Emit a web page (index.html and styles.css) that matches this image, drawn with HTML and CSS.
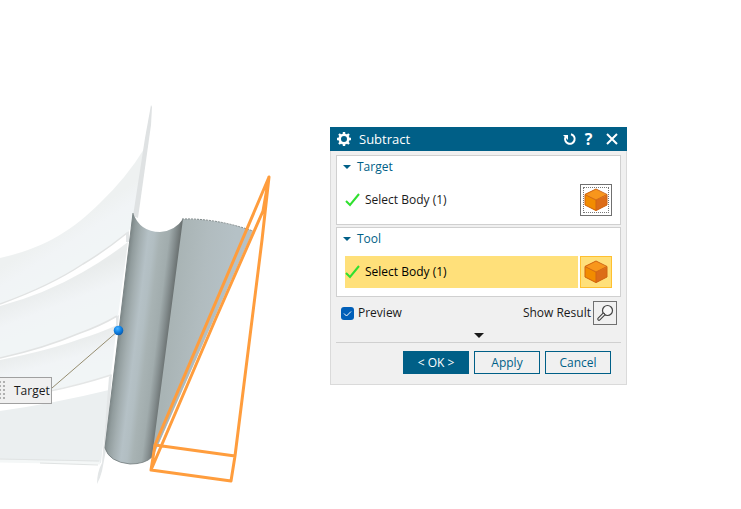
FILE: index.html
```html
<!DOCTYPE html>
<html lang="en">
<head>
<meta charset="utf-8">
<title>Subtract</title>
<link rel="stylesheet" href="styles.css">
</head>
<body>
<main class="viewport">
  <svg class="scene" width="280" height="500" viewBox="0 0 280 500" aria-hidden="true">
    <defs>
      <linearGradient id="barrel" gradientUnits="userSpaceOnUse" x1="133" y1="214" x2="182" y2="220">
        <stop offset="0" stop-color="#7d8788"/>
        <stop offset=".08" stop-color="#919c9d"/>
        <stop offset=".2" stop-color="#a3aeb0"/>
        <stop offset=".36" stop-color="#b5c1c6"/>
        <stop offset=".48" stop-color="#b2bec2"/>
        <stop offset=".6" stop-color="#a8b3b4"/>
        <stop offset=".78" stop-color="#a1acad"/>
        <stop offset=".9" stop-color="#858e8f"/>
        <stop offset="1" stop-color="#6c7373"/>
      </linearGradient>
      <linearGradient id="wing" gradientUnits="userSpaceOnUse" x1="178" y1="260" x2="232" y2="266">
        <stop offset="0" stop-color="#a9b4b5"/>
        <stop offset=".5" stop-color="#b1bcbf"/>
        <stop offset="1" stop-color="#b5c1c6"/>
      </linearGradient>
      <linearGradient id="vane" gradientUnits="userSpaceOnUse" x1="50" y1="284" x2="64" y2="320">
        <stop offset="0" stop-color="#e9ecec"/>
        <stop offset=".6" stop-color="#f1f4f6"/>
        <stop offset="1" stop-color="#f1f5f6"/>
      </linearGradient>
      <linearGradient id="vane-low" gradientUnits="userSpaceOnUse" x1="50" y1="345" x2="58" y2="375">
        <stop offset="0" stop-color="#e9ecec"/>
        <stop offset=".6" stop-color="#f1f4f6"/>
        <stop offset="1" stop-color="#f1f5f6"/>
      </linearGradient>
      <linearGradient id="vane-top" gradientUnits="userSpaceOnUse" x1="72" y1="222" x2="90" y2="250">
        <stop offset="0" stop-color="#eef1f1"/>
        <stop offset=".5" stop-color="#f1f4f6"/>
        <stop offset="1" stop-color="#f1f5f6"/>
      </linearGradient>
      <radialGradient id="ball" cx=".4" cy=".3" r=".7">
        <stop offset="0" stop-color="#4bb4ff"/>
        <stop offset=".5" stop-color="#1285e8"/>
        <stop offset="1" stop-color="#0759ad"/>
      </radialGradient>
    </defs>

    <path fill="url(#vane-top)" d="M0 258C42 249 72 231 100 203Q127 177 144 149L133 225L127 233Q105 251 83 264Q50 286 0 304Z"/>
    <path fill="none" stroke="#e1e3e3" stroke-width="1.5" d="M127 233Q105 251 83 264Q50 286 0 304"/>
    <path fill="url(#vane)" d="M0 306Q45 294 83 272Q106 259 128 242L118 316Q100 326 80 333Q45 348 0 358Z"/>
    <path fill="none" stroke="#e1e3e3" stroke-width="1.5" d="M117 316Q100 326 80 333Q45 348 0 358"/>
    <path fill="url(#vane-low)" d="M0 360Q50 350 80 339Q100 333 117 325L111 375Q70 388 0 399Z"/>
    <path fill="none" stroke="#e4e6e6" stroke-width="1.5" d="M111 375Q80 385 50 391"/>
    <path fill="#ebeff0" d="M0 411Q56 403 109 390L101 463L0 461Z"/>
    <path fill="none" stroke="#f4f7f7" stroke-width="3" d="M0 461L100 463"/>
    <path fill="none" stroke="#e0e3e3" d="M0 459L99 461M40 463L98 465"/>
    <path fill="#dfe2e3" d="M151 105L152 107L151 125L138 218L133 216L145 138Z"/>
    <path fill="#e3e6e7" d="M129 231L126 233L126 242L129 242ZM119 315L116 317L116 326L118 326ZM112 374L109 377L102 463Q97 472 97 484Q100 479 102 471L106 450Z"/>

    <path fill="url(#wing)" d="M182 219Q216 218 253 231L152 459L150 440Z"/>
    <path fill="url(#barrel)" d="M133 213Q140 232 160 232Q175 231 183 219L152 457Q145 464 130 464Q109 462 105 448Z"/>
    <path fill="none" stroke="#7c8687" d="M133 213L105 448"/>
    <path fill="none" stroke="#6f797a" stroke-width=".8" d="M105 448Q109 462 130 464Q145 464 152 457"/>
    <path fill="none" stroke="#7c8687" stroke-dasharray="2 1" d="M182 219Q216 218 253 231"/>

    <path fill="none" stroke="#fff" d="M243 256L160 443"/>
    <path fill="none" stroke="#ff9d3d" stroke-width="3" stroke-linejoin="round" d="M155 445L269 177L262 240L235 456ZM155 445L151 470L231 481L235 456M151 470L216 318L263 211L269 177"/>

    <path fill="none" stroke="#968d70" d="M52 388L118 331"/>
    <circle cx="118.500" cy="330.500" r="4.800" fill="url(#ball)"/>
  </svg>

  <div class="tag"><span class="grip"></span>Target</div>

  <section class="dialog" aria-label="Subtract">
    <header class="titlebar">
      <svg width="16" height="16" viewBox="0 0 16 16" aria-hidden="true">
        <circle cx="8" cy="8" r="4.300" fill="none" stroke="#fff" stroke-width="2.600"/>
        <path stroke="#fff" stroke-width="2.400" d="M8 1V3M8 13V15M1 8H3M13 8H15M3 3L4.500 4.500M11.500 11.500L13 13M13 3L11.500 4.500M4.500 11.500L3 13"/>
      </svg>
      <h1>Subtract</h1>
      <button class="tool" aria-label="Reset"><svg width="14" height="14" viewBox="0 0 14 14"><path fill="none" stroke="#fff" stroke-width="2" d="M8 2.300A4.800 4.800 0 1 1 2.500 5"/><path fill="#fff" d="M0 3H5V8Z"/></svg></button>
      <button class="tool help" aria-label="Help">?</button>
      <button class="tool close" aria-label="Close"><svg width="14" height="14" viewBox="0 0 14 14"><path stroke="#fff" stroke-width="2" d="M2 2L12 12M12 2L2 12"/></svg></button>
    </header>

    <div class="content">
      <section class="group">
        <h2><svg width="8" height="5" viewBox="0 0 8 5"><path fill="#005f87" d="M0 0H8L4 4Z"/></svg>Target</h2>
        <div class="row">
          <div class="pick"><svg width="15" height="14" viewBox="0 0 15 14"><path fill="none" stroke="#2fe02f" stroke-width="2" d="M1 8L5 12L14 1"/></svg>Select Body (1)</div>
          <button class="body-button focused" aria-label="Target body">
            <svg width="24" height="24" viewBox="0 0 24 24"><path fill="#f8961c" d="M12 1L23 7L12 12L1 6Z"/><path fill="#f28c00" d="M1 6L12 12V23L1 17Z"/><path fill="#dc6c18" d="M23 7L12 12V23L23 17Z"/><path fill="none" stroke="#d06410" d="M12 1L23 6.500V17L12 22.500L1 17V6.500ZM1 6.500L12 12L23 6.500M12 12V22"/></svg>
          </button>
        </div>
      </section>

      <section class="group">
        <h2><svg width="8" height="5" viewBox="0 0 8 5"><path fill="#005f87" d="M0 0H8L4 4Z"/></svg>Tool</h2>
        <div class="row">
          <div class="pick active"><svg width="15" height="14" viewBox="0 0 15 14"><path fill="none" stroke="#2fe02f" stroke-width="2" d="M1 8L5 12L14 1"/></svg>Select Body (1)</div>
          <button class="body-button active" aria-label="Tool body">
            <svg width="24" height="24" viewBox="0 0 24 24"><path fill="#f8961c" d="M12 1L23 7L12 12L1 6Z"/><path fill="#f28c00" d="M1 6L12 12V23L1 17Z"/><path fill="#dc6c18" d="M23 7L12 12V23L23 17Z"/><path fill="none" stroke="#d06410" d="M12 1L23 6.500V17L12 22.500L1 17V6.500ZM1 6.500L12 12L23 6.500M12 12V22"/></svg>
          </button>
        </div>
      </section>

      <div class="preview">
        <label class="check"><span class="box"><input type="checkbox" checked><svg class="mark" width="13" height="13" viewBox="0 0 13 13"><path fill="none" stroke="#fff" d="M3 6.500L5.500 9L10 4.500"/></svg></span>Preview</label>
        <label for="show">Show Result</label>
        <button id="show" class="magnify"><svg width="18" height="18" viewBox="0 0 18 18"><circle cx="11.500" cy="6.500" r="5" fill="#f7f7f7" stroke="#444" stroke-width="1.200"/><path fill="none" stroke="#444" stroke-width="3.600" stroke-linecap="round" d="M7.500 10.500L3 15"/><path stroke="#f0f0f0" stroke-width="1.400" stroke-linecap="round" d="M7.500 10.500L3 15"/></svg></button>
      </div>

      <div class="more"><svg width="10" height="5" viewBox="0 0 10 5"><path fill="#1a1a1a" d="M0 0H10L5 5Z"/></svg></div>

      <footer class="actions">
        <button class="action primary">&lt; OK &gt;</button>
        <button class="action">Apply</button>
        <button class="action">Cancel</button>
      </footer>
    </div>
  </section>
</main>
</body>
</html>
```
FILE: styles.css
```css
* { box-sizing: border-box; }
body {
  margin: 0;
  background: #fff;
  color: #1a1a1a;
  font: 12px/16px "Open Sans", "Noto Sans", sans-serif;
}
h1, h2 { margin: 0; font-weight: 400; }
svg { display: block; flex: none; }
button { margin: 0; padding: 0; font: inherit; }

.viewport { position: relative; min-height: 100vh; overflow: hidden; }
.scene { position: absolute; left: 0; top: 0; }

.tag {
  position: absolute;
  left: -4px;
  top: 377px;
  display: flex;
  align-items: center;
  gap: 7px;
  height: 27px;
  padding: 0 1px 0 2px;
  border: 1px solid #a0a0a0;
  background: #f0f0f0;
}
.grip {
  width: 8px;
  height: 20px;
  background: radial-gradient(circle at 1px 1px, #b0b0b0 1px, transparent 1px) 0 0 / 4px 4px;
}

.dialog {
  position: absolute;
  left: 330px;
  top: 127px;
  width: 297px;
  border: 1px solid #dadada;
  border-top: 0;
  background: #f0f0f0;
}
.titlebar {
  display: flex;
  align-items: center;
  gap: 4px;
  height: 24px;
  margin: 0 -1px;
  padding: 0 8px 0 6px;
  background: #005f87;
  color: #fff;
}
.titlebar h1 { flex: 1; padding-left: 3px; font-size: 13px; }
.tool {
  display: grid;
  place-items: center;
  width: 15px;
  height: 20px;
  border: 0;
  background: none;
  color: #fff;
}
.help { font-size: 16px; font-weight: 700; }
.close { margin-left: 4px; }

.content { padding: 4px 5px 10px; }
.group {
  margin-bottom: 2px;
  padding: 3px 8px 8px;
  border: 1px solid #d0d0d0;
  background: #fff;
}
.group h2 {
  display: flex;
  align-items: center;
  gap: 6px;
  height: 16px;
  margin: 0 0 9px -2px;
  color: #005f87;
  font-size: 12px;
}
.row { display: flex; gap: 2px; }
.pick { display: flex; flex: 1; align-items: center; gap: 5px; height: 32px; }
.pick.active { background: #ffe07a; color: #000; }
.body-button {
  display: grid;
  place-items: center;
  width: 32px;
  height: 32px;
  border: 1px solid #707070;
  background: #fff;
}
.body-button.focused { outline: 1px dotted #777; outline-offset: -4px; }
.body-button.active { border-color: #ffc030; background: #ffe07a; }

.preview { display: flex; align-items: center; gap: 2px; height: 24px; margin-top: 4px; padding: 0 4px 0 5px; }
.check { display: flex; flex: 1; align-items: center; gap: 4px; }
.box { display: grid; }
.box > * { grid-area: 1 / 1; }
.box input { appearance: none; width: 13px; height: 13px; margin: 0; border-radius: 3px; }
.box input:checked { background: #005fb8; }
.box .mark { pointer-events: none; }
.magnify {
  display: grid;
  place-items: center;
  width: 24px;
  height: 24px;
  border: 1px solid #707070;
  background: #f0f0f0;
}

.more { display: flex; justify-content: center; height: 18px; padding-top: 8px; border-bottom: 1px solid #d0d0d0; }
.actions { display: flex; justify-content: flex-end; gap: 5px; padding: 8px 10px 0 0; }
.action {
  width: 66px;
  height: 23px;
  border: 1px solid #005f87;
  background: #f0f0f0;
  color: #005f87;
}
.action.primary { background: #005f87; color: #fff; }
```
